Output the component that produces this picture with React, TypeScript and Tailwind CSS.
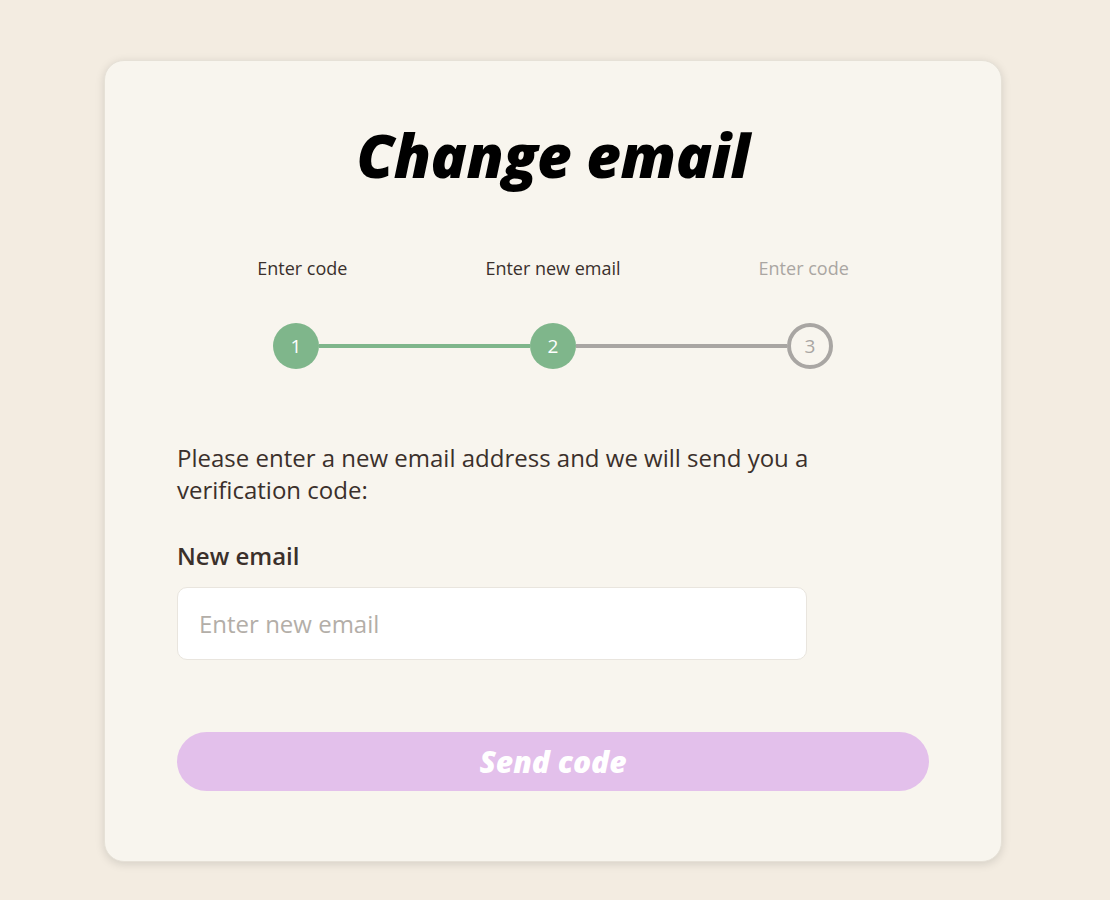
import React from 'react'

const steps = [
  { label: 'Enter code', n: 1, state: 'done' },
  { label: 'Enter new email', n: 2, state: 'current' },
  { label: 'Enter code', n: 3, state: 'todo' },
]

function Stepper() {
  return (
    <div>
      {/* labels */}
      <div className="grid grid-cols-3">
        {steps.map((s, i) => (
          <span
            key={i}
            className={
              'text-center whitespace-nowrap text-[18px] leading-[24px] ' +
              (s.state === 'todo' ? 'text-[#aaa6a2]' : 'text-[#3a302c]')
            }
          >
            {s.label}
          </span>
        ))}
      </div>

      {/* circles + lines */}
      <div className="mx-auto mt-[43px] flex w-[560px] items-center">
        <div className="flex h-[46px] w-[46px] items-center justify-center rounded-full bg-[#7fb68b] text-[19px] text-white">
          1
        </div>
        <div className="h-[4px] flex-1 bg-[#7fb68b]" />
        <div className="flex h-[46px] w-[46px] items-center justify-center rounded-full bg-[#7fb68b] text-[19px] text-white">
          2
        </div>
        <div className="h-[4px] flex-1 bg-[#a9a6a3]" />
        <div className="flex h-[46px] w-[46px] items-center justify-center rounded-full border-[4px] border-[#a9a6a3] bg-[#f8f5ee] text-[19px] text-[#a9a6a3]">
          3
        </div>
      </div>
    </div>
  )
}

export default function App() {
  return (
    <div
      className="min-h-[900px] bg-[#f3ece1] pt-[60px] pb-[38px]"
      style={{ fontFamily: '"Open Sans", "Noto Sans", sans-serif' }}
    >
      <div className="ml-[104px] w-[898px] rounded-[20px] border border-[#e6e1d7] bg-[#f8f5ee] px-[72px] pt-[59px] pb-[70px] shadow-[0_2px_10px_rgba(0,0,0,0.13)]">
        <h1 className="text-center text-[60px] font-extrabold italic leading-[70px] tracking-[-0.5px] text-black">
          Change email
        </h1>

        <div className="mt-[66px]">
          <Stepper />
        </div>

        <p className="mt-[73px] w-[700px] text-[24px] leading-[32px] text-[#3b302b]">
          Please enter a new email address and we will send you a verification code:
        </p>

        <label className="mt-[34px] block text-[24px] font-semibold leading-[32px] text-[#3b302b]">
          New email
        </label>

        <input
          type="email"
          placeholder="Enter new email"
          className="mt-[15px] block h-[73px] w-[630px] rounded-[10px] border border-[#e9e5de] bg-white px-[21px] text-[24px] text-[#3b302b] outline-none placeholder:text-[#b3aea8]"
        />

        <button className="mt-[72px] block h-[59px] w-full rounded-full bg-[#e3c0eb] text-[30px] font-extrabold italic text-white">
          Send code
        </button>
      </div>
    </div>
  )
}
